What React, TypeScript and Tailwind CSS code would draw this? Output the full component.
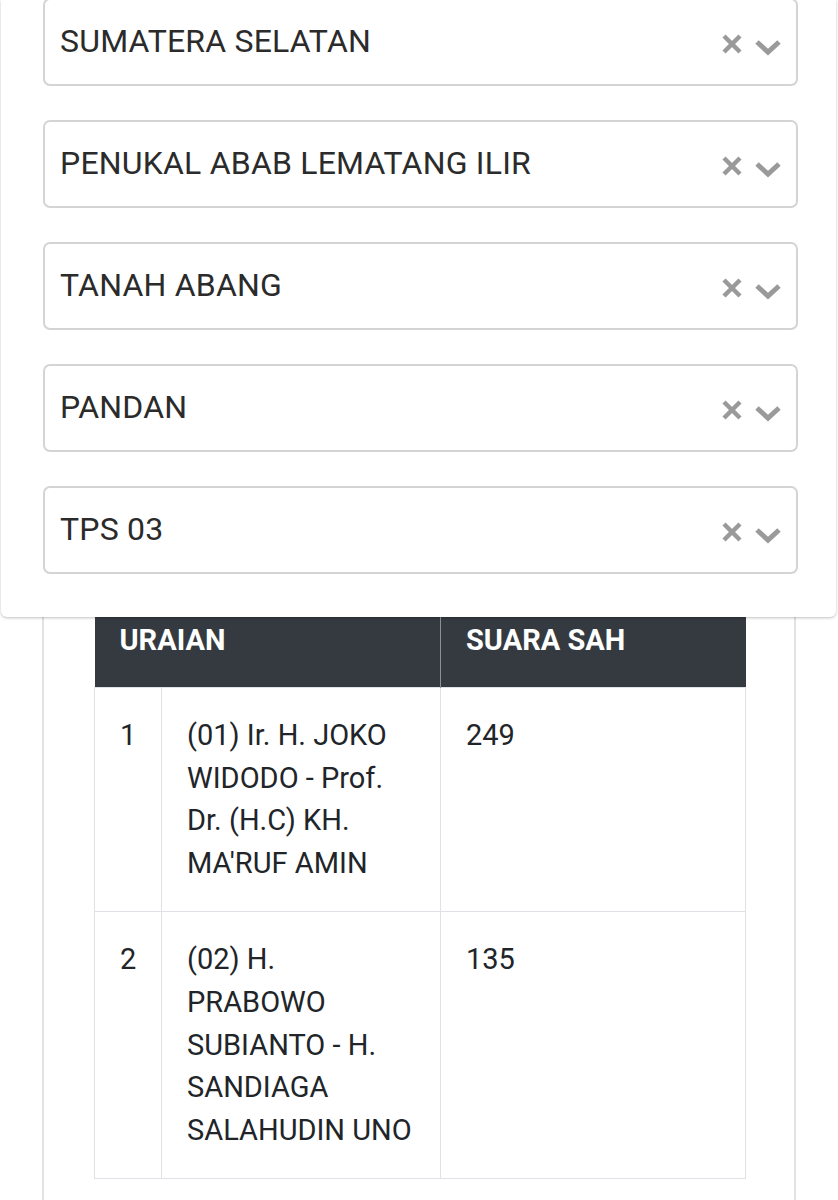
import type { ReactNode } from 'react'

const regions = ['SUMATERA SELATAN', 'PENUKAL ABAB LEMATANG ILIR', 'TANAH ABANG', 'PANDAN', 'TPS 03']

const votes = [
  { no: 1, name: "(01) Ir. H. JOKO WIDODO - Prof. Dr. (H.C) KH. MA'RUF AMIN", total: 249 },
  { no: 2, name: '(02) H. PRABOWO SUBIANTO - H. SANDIAGA SALAHUDIN UNO', total: 135 },
]

function ClearIcon() {
  return (
    <svg width="24" height="24" viewBox="0 0 24 24" className="text-[#9a9a9a]">
      <path d="M4 4 L20 20 M20 4 L4 20" stroke="currentColor" strokeWidth="4.5" strokeLinecap="butt" />
    </svg>
  )
}

function ChevronIcon() {
  return (
    <svg width="28" height="18" viewBox="0 0 28 18" className="text-[#9a9a9a]">
      <path d="M3 4 L14 14 L25 4" stroke="currentColor" strokeWidth="5" fill="none" />
    </svg>
  )
}

function RegionSelect({ value }: { value: string }) {
  return (
    <div className="flex h-[88px] items-center rounded-[7px] border-2 border-[#d4d4d4] bg-white pl-[15px] pr-[14px]">
      <span className="-mt-[2px] flex-1 text-[32px] leading-none tracking-[0.2px] text-[#2b2b2b]">{value}</span>
      <div className="flex items-center gap-[10px] pt-[4px]">
        <ClearIcon />
        <div className="pt-[6px]">
          <ChevronIcon />
        </div>
      </div>
    </div>
  )
}

function Cell({ children }: { children: ReactNode }) {
  return <td className="border border-[#dee2e6] px-[25px] py-[26px] align-top">{children}</td>
}

export default function App() {
  return (
    <div className="relative h-[1200px] w-[838px] overflow-hidden bg-white font-['Roboto',sans-serif] text-[#212529]">
      {/* results card under the filter panel */}
      <div className="mx-[42px] min-h-[1240px] border-x-2 border-[#e2e2e2] bg-white pt-[610px]">
        <table className="ml-[50px] w-[651px] table-fixed border-collapse text-[29px] leading-[42.8px]">
          <colgroup>
            <col className="w-[67px]" />
            <col className="w-[279px]" />
            <col className="w-[305px]" />
          </colgroup>
          <thead>
            <tr className="bg-[#343a40] text-left text-white">
              <th colSpan={2} className="h-[77px] border-r border-[#8d9196] px-[25px] pb-[25px] pt-[9px] align-top font-bold">
                URAIAN
              </th>
              <th className="h-[77px] px-[25px] pb-[25px] pt-[9px] align-top font-bold">SUARA SAH</th>
            </tr>
          </thead>
          <tbody>
            {votes.map((v) => (
              <tr key={v.no}>
                <Cell>{v.no}</Cell>
                <Cell>{v.name}</Cell>
                <Cell>{v.total}</Cell>
              </tr>
            ))}
          </tbody>
        </table>
      </div>

      {/* filter panel pinned over the page */}
      <div className="absolute left-[1px] top-0 w-[835px] rounded-b-[6px] bg-white pb-[43px] pl-[42px] pr-[38px] shadow-[0_1px_3px_rgba(0,0,0,0.25)]">
        <div className="-mt-[2px] flex flex-col gap-[34px]">
          {regions.map((r) => (
            <RegionSelect key={r} value={r} />
          ))}
        </div>
      </div>
    </div>
  )
}
